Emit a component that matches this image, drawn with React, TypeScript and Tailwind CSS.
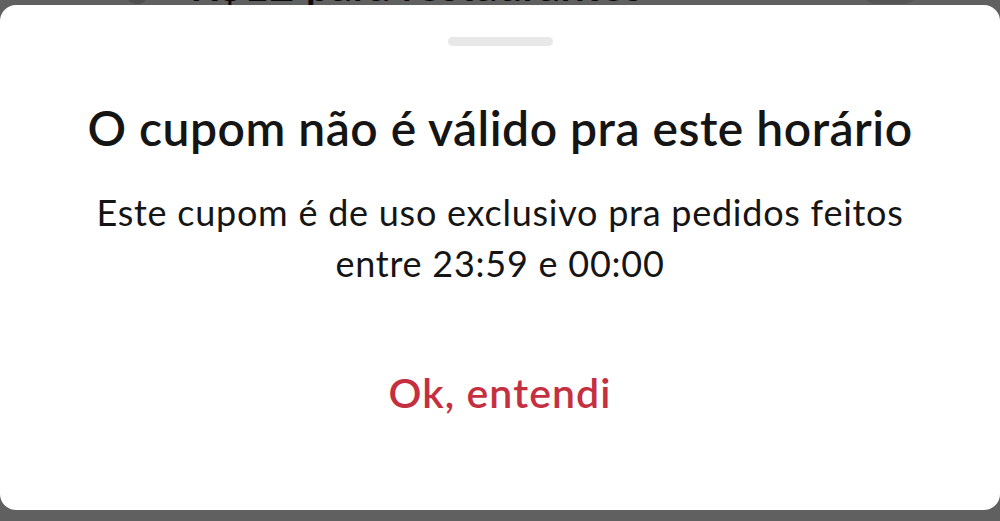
export default function App() {
  return (
    <div
      className="h-[521px] w-[1000px] overflow-hidden bg-[#606060] flex flex-col"
      style={{ fontFamily: "Lato, 'Noto Sans', sans-serif" }}
    >
      {/* Tela por trás do overlay */}
      <div className="h-[5px] overflow-hidden relative">
        <div className="absolute left-[125px] top-[-20px] w-[24px] h-[24px] rounded-full bg-[#4f4f4f]" />
        <div className="absolute left-[860px] top-[-30px] w-[60px] h-[34px] rounded-full bg-[#555555]" />
        <div className="absolute left-[190px] top-[-38px] text-[44px] font-semibold leading-none text-[#0a0a0a] whitespace-nowrap">
          R$12 para restaurantes
        </div>
      </div>

      {/* Bottom sheet */}
      <div className="h-[505px] w-full bg-white rounded-[16px] flex flex-col items-center pt-[32px]">
        <div className="w-[105px] h-[9px] rounded-full bg-[#e8e8e8]" />

        <h1 className="mt-[54px] text-[48px] leading-[56px] font-semibold text-[#151515] tracking-[0.5px] whitespace-nowrap">
          O cupom não é válido pra este horário
        </h1>

        <p className="mt-[31px] text-center text-[36px] leading-[51px] text-[#151515] tracking-[0.75px]">
          Este cupom é de uso exclusivo pra pedidos feitos
          <br />
          entre 23:59 e 00:00
        </p>

        <button className="mt-[80px] text-[41px] leading-[48px] font-semibold text-[#c4303f] tracking-[1.1px]">
          Ok, entendi
        </button>
      </div>
    </div>
  );
}
